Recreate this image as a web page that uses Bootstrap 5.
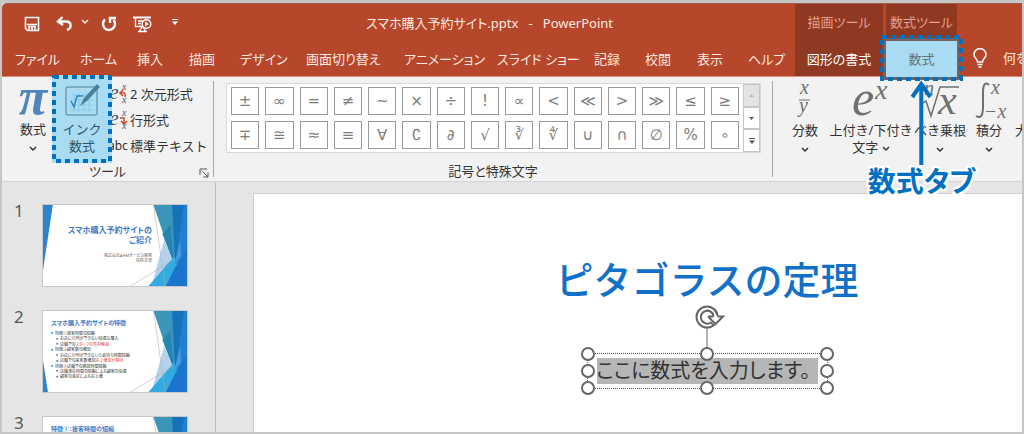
<!DOCTYPE html>
<html lang="ja">
<head>
<meta charset="utf-8">
<meta name="viewport" content="width=device-width, initial-scale=1">
<title>スマホ購入予約サイト.pptx - PowerPoint</title>
<link rel="stylesheet" href="https://cdn.jsdelivr.net/npm/bootstrap@5.3.0/dist/css/bootstrap.min.css">
<style>
  :root { --brand: #b7472a; --brand-dark: #8f3822; --mark: #0070c0; --mark-fill: #a9dcf2; }
  body { font-family: "Noto Sans", "Noto Sans CJK JP", sans-serif; font-size: 13px; line-height: 20px; color: #333; font-feature-settings: "palt"; }
  button { background: none; border: 0; padding: 0; color: inherit; }
  .app { height: 100vh; background: #e5e5e5; border: 2px solid #c6c6c6; border-top-width: 3px; }
  /* title bar and tabs */
  .top-area { background: var(--brand); color: #fbe9e3; border-top: 1px solid #a0604e; border-bottom: 1px solid #d98e7a; height: 74px; border-top-left-radius: 5px; }
  .quick { width: 364px; padding-left: 22px; }
  .title-row { height: 37px; }
  .tab-row { display: grid; grid-template-columns: 65px 57px 52px 51px 66px 98px 93px 97px 51px 52px 51px 47px; height: 36px; padding-left: 13px; }
  .top-area a { color: inherit; text-decoration: none; white-space: nowrap; line-height: 36px; }
  .context-set { background: var(--brand-dark); text-align: center; }
  .context-name { height: 37px; line-height: 37px; color: #e5a08c; }
  .context-a { width: 88px; }
  .context-b { width: 71px; margin-left: 3px; }
  .active-tab { background: var(--mark-fill); box-shadow: 0 0 0 3px #74635f; color: #66727a !important; height: 36px; }
  .dotted-frame { position: absolute; overflow: visible; pointer-events: none; z-index: 5; }
  .dotted-frame rect { fill: none; stroke: var(--mark); stroke-width: 4; stroke-dasharray: 5 4; }
  .frame-tab { inset: -4px -4px -2px -4px; width: calc(100% + 8px); height: calc(100% + 6px); }
  .callout-mark { position: absolute; top: 100%; left: 50%; transform: translateX(-50%); z-index: 6; color: var(--mark); font-weight: 700; font-size: 28px; line-height: 32px; white-space: nowrap; text-shadow: 2px 0 #fff, -2px 0 #fff, 0 2px #fff, 0 -2px #fff, 2px 2px #fff, -2px -2px #fff, 2px -2px #fff, -2px 2px #fff; }
  .callout-mark svg { margin-top: 3px; }
  /* ribbon */
  .ribbon { background: #f2f2f2; height: 105px; border-bottom: 1px solid #d4d4d4; padding-top: 4px; }
  .ribbon-group { height: 96px; }
  .ribbon-rule { border-right: 1px solid #a8a8a8; }
  .tool-group { width: 212px; }
  .symbol-group { width: 559px; padding-top: 2px; }
  .group-name { line-height: 20px; text-align: center; }
  .group-body { height: 80px; }
  .pi-button { width: 50px; padding-left: 12px; }
  .pi-sign { font-family: "Liberation Serif", serif; font-style: italic; font-weight: 700; font-size: 52px; line-height: 40px; height: 40px; margin-top: -4px; color: #4f86bd; }
  .tool-label { line-height: 17px; }
  .ink-button { width: 60px; height: 88px; top: -6px; background: var(--mark-fill); color: #2e5568; z-index: 2; }
  .frame-ink { inset: 2px; width: calc(100% - 4px); height: calc(100% - 4px); }
  .format-list { margin-left: -4px; }
  .format-list button { display: flex; align-items: center; height: 26px; white-space: nowrap; }
  .format-list svg, .format-list .abc { width: 22px; flex: none; text-align: left; }
  .format-list .abc { font-size: 12px; }
  .format-list text { font-family: "Liberation Serif", serif; font-style: italic; fill: #555; }
  .gallery { background: #fff; border: 1px solid #d8d8d8; width: 535px; height: 70px; }
  .symbols { display: grid; grid-template-columns: repeat(15, 1fr); grid-auto-rows: 28px; gap: 6px; padding: 3px 4px; }
  .symbols button { border: 1px solid #9a9a9a; color: #7c7c7c; font: 15px/24px "DejaVu Sans", sans-serif; }
  .spin { width: 17px; }
  .spin button { border: 1px solid #c6c6c6; flex: 1; width: 17px; display: grid; place-items: center; }
  .spin .at-end { background: #e3e3e3; }
  .math-tools { display: grid; grid-template-columns: 64px 68px 70px 28px 80px; }
  .math-tools button { white-space: nowrap; display: flex; flex-direction: column; align-items: center; line-height: 17px; }
  .math-tools .big { height: 41px; overflow: visible; flex: none; }
  .math-tools .next-tool { align-items: flex-start; padding: 41px 0 0 12px; justify-self: start; }
  .math-tools text { font-family: "Liberation Serif", serif; font-style: italic; fill: #707070; }
  /* slide list */
  .slide-list { width: 214px; border-right: 1px solid #bdbdbd; padding: 22px 0 0 12px; overflow: hidden; }
  .slide-item { height: 106px; display: grid; grid-template-columns: 28px 146px; }
  .slide-no { font-size: 17px; line-height: 14px; color: #555; }
  .thumb { position: relative; height: 83px; background: #fff; border: 1px solid #c8c8c8; overflow: hidden; }
  .thumb svg { position: absolute; inset: 0; width: 100%; height: 100%; }
  .cover-text { width: 109px; padding-top: 20px; }
  .thumb-title { font-size: 6px; line-height: 8px; font-weight: 700; color: #3b7cc9; }
  .cover-text .thumb-title { font-size: 8px; line-height: 10px; }
  .thumb-sub { font-size: 4px; line-height: 5px; color: #666; }
  .thumb-list { font-size: 4px; line-height: 5px; color: #333; list-style: none; padding: 0; }
  .thumb-list ul { list-style: none; padding-left: 5px; }
  .thumb-list li::before { content: "■"; font-size: 2px; color: #2e83cf; margin-right: 2px; vertical-align: middle; }
  .hot { color: #e8402f; }
  /* slide */
  .slide { margin: 11px 0 0 37px; background: #fff; border: 1px solid #cfcfcf; border-right: 0; border-bottom: 0; padding-left: 138px; }
  .slide-title { font-size: 38px; line-height: 48px; margin-top: 61px; color: #1170c8; font-feature-settings: normal; font-weight: 500; white-space: nowrap; }
  .rotate { display: block; margin-top: 1px; }
  .equation-box { position: relative; width: 241px; height: 36px; border: 1px dotted #555; padding: 4px 9px; }
  .equation-text { background: #b5b5b5; color: #333; font-size: 20px; line-height: 26px; white-space: nowrap; }
  .grip { position: absolute; width: 14px; height: 14px; border: 2px solid #666; border-radius: 50%; background: #fff; transform: translate(-50%, -50%); }
  .g-t { top: 0; } .g-m { top: 50%; } .g-b { top: 100%; }
  .g-l { left: 0; } .g-c { left: 50%; } .g-r { left: 100%; }
</style>
</head>
<body>
<svg width="0" height="0" class="position-absolute" aria-hidden="true">
  <symbol id="chev" viewBox="0 0 8 6"><path d="M1 1l3 3 3-3" fill="none" stroke="currentColor" stroke-width="1.5"/></symbol>
  <symbol id="facets" viewBox="0 0 146 82" preserveAspectRatio="none">
    <path d="M112 0h20l5 45-4 16z" fill="#3b95b9"/>
    <path d="M131 0h15v82h-20l8-24z" fill="#2180d3"/>
    <path d="M131 0h12l-6 40-3 20z" fill="#1673bb"/>
    <path d="M129 20l-8 9 12 31z" fill="#2585b0"/>
    <path d="M123 35l10 25-18 22h-5z" fill="#b4d2ee"/>
    <path d="M107 82l26-30 3 8-12 22z" fill="#32abe0"/>
    <path d="M146 44v38h-22l12-22z" fill="#1b74ce"/>
    <path d="M139 36l-6 25 7-9z" fill="#4699de"/>
    <path d="M112 0l12 82M89 82l44-27" stroke="#aaa" stroke-opacity=".55" fill="none"/>
  </symbol>
</svg>

<div class="app d-flex flex-column overflow-hidden">
  <header class="top-area d-flex flex-shrink-0">
    <div class="flex-shrink-0">
      <div class="title-row d-flex align-items-center">
        <div class="quick d-flex align-items-center">
          <button aria-label="上書き保存"><svg width="16" height="16" viewBox="0 0 16 16" fill="none" stroke="#fff" stroke-width="1.6"><path d="M1.500 1.500h13v13h-11l-2-2zM3 8.500h10M5 14v-3.500h6V14M8 11v3"/></svg></button>
          <button class="ms-3" aria-label="元に戻す"><svg width="17" height="16" viewBox="0 0 17 16" fill="none" stroke="#fff" stroke-width="2.4"><path d="M6.500 1L2 5.500 7 9M2 5.500h8c6 0 6 7 1 8.500"/></svg></button>
          <button class="ms-2 d-flex" aria-label="元に戻す一覧"><svg width="8" height="6"><use href="#chev"/></svg></button>
          <button class="ms-2 ps-1" aria-label="繰り返し"><svg width="16" height="16" viewBox="0 0 16 16" fill="none" stroke="#fff" stroke-width="2.400"><path d="M4 3.500a6 6 0 1 0 8.500 .5M9 7V2h6"/></svg></button>
          <button class="ms-3" aria-label="スライドショー"><svg width="19" height="17" viewBox="0 0 19 17" fill="none" stroke="#fff" stroke-width="1.400"><path d="M0 1.500h18" stroke-width="2"/><path d="M2.500 2v8.500H9M5 5h5M5 7.500h3M9 11l-3 5M10 11l3 5M5 15.500h9"/><circle cx="13.500" cy="8" r="4.300"/><path d="M12 5.500l4 2.500-4 2.500z" fill="#fff" stroke="none"/></svg></button>
          <button class="ms-3 ps-1 d-flex" aria-label="ツールバーの設定"><svg width="6" height="6" viewBox="0 0 6 6" fill="#fff"><path d="M0 0h6v1H0zM0 2.500h6L3 6z"/></svg></button>
        </div>
        <div class="text-nowrap">スマホ購入予約サイト.pptx &nbsp;&nbsp;-&nbsp;&nbsp; PowerPoint</div>
      </div>
      <nav class="tab-row" aria-label="リボン">
        <a href="#">ファイル</a><a href="#">ホーム</a><a href="#">挿入</a><a href="#">描画</a><a href="#">デザイン</a><a href="#">画面切り替え</a><a href="#">アニメーション</a><a href="#">スライド ショー</a><a href="#">記録</a><a href="#">校閲</a><a href="#">表示</a><a href="#">ヘルプ</a>
      </nav>
    </div>
    <div class="context-set context-a flex-shrink-0">
      <div class="context-name">描画ツール</div>
      <a href="#" class="d-block text-white">図形の書式</a>
    </div>
    <div class="context-set context-b flex-shrink-0">
      <div class="context-name">数式ツール</div>
      <div class="position-relative">
        <a href="#" class="active-tab d-block" aria-current="page">数式</a>
        <svg class="dotted-frame frame-tab" aria-hidden="true"><rect width="100%" height="100%"/></svg>
        <div class="callout-mark d-flex flex-column align-items-center">
          <svg width="22" height="85" viewBox="0 0 22 85" fill="none" stroke="#0070c0" stroke-width="4"><path d="M11 85V4M2 17l9-13 9 13"/></svg>
          <span>数式タブ</span>
        </div>
      </div>
    </div>
    <div class="d-flex align-items-end overflow-hidden ps-3 gap-2">
      <svg class="flex-shrink-0 mb-2" width="14" height="20" viewBox="0 0 14 20" fill="none" stroke="#fff" stroke-width="1.500"><path d="M4.500 14c0-3-3.500-4-3.500-7.500a6 6 0 0 1 12 0C13 10 9.500 11 9.500 14zM4.500 16.500h5M5.500 19h3"/></svg>
      <a href="#" class="ms-2">何をしますか</a>
    </div>
  </header>

  <section class="ribbon d-flex flex-shrink-0" aria-label="数式">
    <div class="ribbon-group tool-group ribbon-rule flex-shrink-0">
      <div class="group-body d-flex">
        <button class="pi-button d-flex flex-column align-items-center flex-shrink-0">
          <span class="pi-sign">π</span><span class="tool-label mt-1">数式</span><svg class="mt-2" width="8" height="6"><use href="#chev"/></svg>
        </button>
        <button class="ink-button position-relative flex-shrink-0 d-flex flex-column align-items-center pt-2">
          <svg class="flex-shrink-0" width="36" height="34" viewBox="0 0 36 34" fill="none"><rect x="2" y="4" width="31" height="28" rx="2" stroke="#6d9db2" stroke-width="1.500"/><path d="M7 12h22M7 17h22M7 22h22M7 27h22M10 10v19M15 10v19M20 10v19M25 10v19" stroke="#8accec"/><path d="M7 18l3 6 3-11h6" stroke="#2b86c4" stroke-width="1.500"/><path d="M33 1l3 3-13 14-7 5 4-8z" fill="#4a8197"/></svg>
          <span class="tool-label mt-1">インク<br>数式</span>
          <svg class="dotted-frame frame-ink" aria-hidden="true"><rect width="100%" height="100%"/></svg>
        </button>
        <div class="format-list">
          <button><svg width="22" height="20" viewBox="0 0 22 20"><text x="1" y="15" font-size="22">e</text><text x="14" y="6" font-size="10">x</text><text x="14" y="19" font-size="10">x</text><path d="M17 13c1-4-1-5-5-4M15 6l-3 3 3 3" stroke="#d0492a" stroke-width="1.500" fill="none"/></svg>2 次元形式</button>
          <button><svg width="22" height="20" viewBox="0 0 22 20"><text x="1" y="15" font-size="22">e</text><text x="14" y="6" font-size="10">x</text><text x="14" y="19" font-size="10">x</text><path d="M12 8h4v5M13 11l3 3 3-3" stroke="#d0492a" stroke-width="1.500" fill="none"/></svg>行形式</button>
          <button><span class="abc">abc</span>標準テキスト</button>
        </div>
      </div>
      <div class="group-name position-relative">ツール
        <button class="position-absolute end-0 top-0 me-1" aria-label="ツールの設定"><svg width="10" height="10" viewBox="0 0 10 10" fill="none" stroke="#555"><path d="M1 7V1h7M3.500 3.500L9 9M9 4.500V9H4.500" /></svg></button>
      </div>
    </div>

    <div class="ribbon-group symbol-group ribbon-rule flex-shrink-0 px-2">
      <div class="gallery d-flex ms-1">
        <div class="symbols flex-grow-1">
          <button>±</button><button>∞</button><button>=</button><button>≠</button><button>~</button><button>×</button><button>÷</button><button>!</button><button>∝</button><button>&lt;</button><button>≪</button><button>&gt;</button><button>≫</button><button>≤</button><button>≥</button>
          <button>∓</button><button>≅</button><button>≈</button><button>≡</button><button>∀</button><button>∁</button><button>∂</button><button>√</button><button>∛</button><button>∜</button><button>∪</button><button>∩</button><button>∅</button><button>%</button><button>∘</button>
        </div>
        <div class="spin d-flex flex-column">
          <button class="at-end" aria-label="上へ"><svg width="5" height="3" viewBox="0 0 5 3"><path d="M0 3l2.500-3L5 3z" fill="#bbb"/></svg></button>
          <button aria-label="下へ"><svg width="5" height="3" viewBox="0 0 5 3"><path d="M0 0l2.500 3L5 0z" fill="#555"/></svg></button>
          <button aria-label="その他"><svg width="6" height="6" viewBox="0 0 6 6" fill="#555"><path d="M0 0h6v1H0zM0 2.500h6L3 6z"/></svg></button>
        </div>
      </div>
      <div class="group-name mt-2">記号と特殊文字</div>
    </div>

    <div class="math-tools align-items-start overflow-hidden">
      <button><svg class="big" width="28" viewBox="0 0 28 41"><text x="9" y="13" font-size="20">x</text><path d="M8 19h11" stroke="#707070"/><text x="8" y="31" font-size="20">y</text></svg><span>分数</span><svg width="8" height="6" class="mt-2"><use href="#chev"/></svg></button>
      <button><svg class="big" width="40" viewBox="0 0 40 41"><text x="1" y="34" font-size="50">e</text><text x="24" y="18" font-size="28">x</text></svg><span>上付き/下付き<br>文字 <svg width="8" height="6"><use href="#chev"/></svg></span></button>
      <button><svg class="big" width="40" viewBox="0 0 40 41"><text x="4" y="14" font-size="20">n</text><path d="M3 22l3-2 5 15L20 6h19" stroke="#707070" stroke-width="1.500" fill="none"/><text x="18" y="33" font-size="42">x</text></svg><span>べき乗根</span><svg width="8" height="6" class="mt-2"><use href="#chev"/></svg></button>
      <button><svg class="big" width="30" viewBox="0 0 30 41"><path d="M15 4c-4-4-6 0-6 8v14c0 8-2 12-7 9" stroke="#707070" stroke-width="2" fill="none"/><text x="17" y="13" font-size="20">x</text><text x="10" y="37" font-size="20">−x</text></svg><span>積分</span><svg width="8" height="6" class="mt-2"><use href="#chev"/></svg></button>
      <button class="next-tool">大型演算子</button>
    </div>
  </section>

  <div class="d-flex flex-grow-1 overflow-hidden">
    <aside class="slide-list flex-shrink-0" aria-label="スライド一覧">
      <div class="slide-item"><span class="slide-no">1</span>
        <div class="thumb"><svg aria-hidden="true"><use href="#facets"/></svg><svg viewBox="0 0 146 82" aria-hidden="true"><path d="M0 0h10L0 66z" fill="#2e83cf"/></svg>
          <div class="cover-text position-relative text-end"><div class="thumb-title">スマホ購入予約サイトの<br>ご紹介</div><div class="thumb-sub mt-2">株式会社AHMサービス開発<br>技術本部</div></div></div>
      </div>
      <div class="slide-item"><span class="slide-no">2</span>
        <div class="thumb"><svg aria-hidden="true"><use href="#facets"/></svg><svg viewBox="0 0 146 82" aria-hidden="true"><path d="M0 50l5 32H0z" fill="#2e83cf"/></svg>
          <div class="position-relative ps-2 pt-2"><div class="thumb-title">スマホ購入予約サイトの特徴</div>
          <ul class="thumb-list mt-1 mb-0"><li>特徴①接客時間の短縮<ul><li>お店に行列ができない快適な購入</li><li>店舗での<span class="hot">スタッフの負担軽減</span></li></ul></li><li>特徴②顧客数の増加<ul><li>お店に行列ができないため待ち時間短縮</li><li>店舗での来客数増加<span class="hot">売上増加が期待</span></li></ul></li><li>特徴③店舗での商談時間短縮<ul><li>店舗滞在時間の短縮による顧客の快適</li><li>顧客の満足による売上増</li></ul></li></ul></div></div>
      </div>
      <div class="slide-item"><span class="slide-no">3</span>
        <div class="thumb"><svg aria-hidden="true"><use href="#facets"/></svg>
          <div class="position-relative ps-2 pt-2"><div class="thumb-title">特徴①：接客時間の短縮</div></div></div>
      </div>
    </aside>
    <main class="slide flex-grow-1 d-flex flex-column align-items-center overflow-hidden">
      <h1 class="slide-title mb-0">ピタゴラスの定理</h1>
      <svg class="rotate flex-shrink-0" width="36" height="49" viewBox="0 0 36 49" fill="none" stroke="#666"><path d="M18 24v25"/><circle cx="18" cy="13" r="10.500" fill="#fff" stroke-width="2"/><path d="M24 10a6.500 6.500 0 1 0-2 8.500l3 3" stroke-width="2"/><path d="M18 12h17l-8 8z" fill="#fff" stroke="#fff" stroke-width="3"/><path d="M24.500 12.500A6.500 6.500 0 0 0 18 6.500M28.500 12A10.500 10.500 0 0 0 25 5M19 12.500h5.500M28.500 12.500H34L26.500 20 19 12.500" stroke-width="2"/></svg>
      <div class="equation-box flex-shrink-0">
        <div class="equation-text">ここに数式を入力します。</div>
        <span class="grip g-t g-l"></span><span class="grip g-t g-c"></span><span class="grip g-t g-r"></span>
        <span class="grip g-m g-l"></span><span class="grip g-m g-r"></span>
        <span class="grip g-b g-l"></span><span class="grip g-b g-c"></span><span class="grip g-b g-r"></span>
      </div>
    </main>
  </div>
</div>
<script src="https://cdn.jsdelivr.net/npm/bootstrap@5.3.0/dist/js/bootstrap.bundle.min.js"></script>
</body>
</html>
